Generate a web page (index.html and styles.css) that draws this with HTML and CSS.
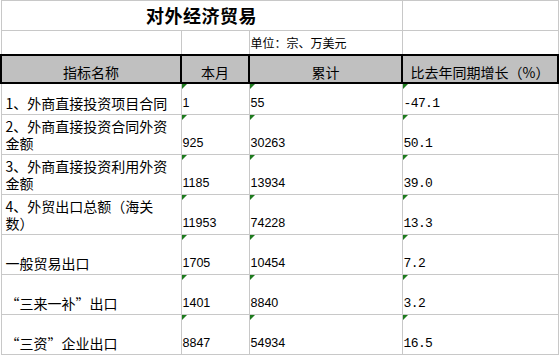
FILE: index.html
```html
<!DOCTYPE html>
<html lang="zh-CN">
<head>
    <meta charset="UTF-8">
    <meta name="viewport" content="width=device-width, initial-scale=1.0">
    <title>对外经济贸易</title>
    <link rel="stylesheet" href="styles.css">
</head>
<body>
    <table class="hoja">
        <colgroup>
            <col class="col-nombre">
            <col class="col-mes">
            <col class="col-total">
            <col class="col-crec">
        </colgroup>
        <tr class="fila-titulo">
            <td colspan="3" class="titulo">对外经济贸易</td>
            <td></td>
        </tr>
        <tr class="fila-unidad">
            <td></td>
            <td></td>
            <td class="unidad">单位：宗、万美元</td>
            <td></td>
        </tr>
        <tr class="fila-cabecera">
            <th>指标名称</th>
            <th>本月</th>
            <th>累计</th>
            <th>比去年同期增长（%）</th>
        </tr>
        <tr class="fila-corta">
            <td class="nombre">1、外商直接投资项目合同</td>
            <td class="num marca">1</td>
            <td class="num marca">55</td>
            <td class="pct marca">-47.1</td>
        </tr>
        <tr class="fila">
            <td class="nombre">2、外商直接投资合同外资<br>金额</td>
            <td class="num marca">925</td>
            <td class="num marca">30263</td>
            <td class="pct marca">50.1</td>
        </tr>
        <tr class="fila">
            <td class="nombre">3、外商直接投资利用外资<br>金额</td>
            <td class="num marca">1185</td>
            <td class="num marca">13934</td>
            <td class="pct marca">39.0</td>
        </tr>
        <tr class="fila">
            <td class="nombre">4、外贸出口总额（海关<br>数）</td>
            <td class="num marca">11953</td>
            <td class="num marca">74228</td>
            <td class="pct marca">13.3</td>
        </tr>
        <tr class="fila">
            <td class="nombre">一般贸易出口</td>
            <td class="num marca">1705</td>
            <td class="num marca">10454</td>
            <td class="pct marca">7.2</td>
        </tr>
        <tr class="fila">
            <td class="nombre">“三来一补”出口</td>
            <td class="num marca">1401</td>
            <td class="num marca">8840</td>
            <td class="pct marca borde-activo">3.2</td>
        </tr>
        <tr class="fila">
            <td class="nombre">“三资”企业出口</td>
            <td class="num marca">8847</td>
            <td class="num marca">54934</td>
            <td class="pct marca">16.5</td>
        </tr>
    </table>
</body>
</html>
```

FILE: styles.css
```css
html, body {
    margin: 0;
}

body {
    background: #fff;
    color: #000;
    font-family: "Noto Sans CJK SC", sans-serif;
}

.hoja {
    border-collapse: collapse;
    table-layout: fixed;
    width: 557px;
}

.col-nombre { width: 180px; }
.col-mes { width: 68px; }
.col-total { width: 153px; }
.col-crec { width: 156px; }

.hoja td,
.hoja th {
    border: 1px solid #c8c8c8;
    padding: 0 2px 2px;
    vertical-align: bottom;
    font-size: 14px;
    line-height: 17px;
    font-weight: normal;
    white-space: nowrap;
    overflow: hidden;
}

.fila-titulo { height: 30px; }
.fila-unidad { height: 24px; }
.fila-cabecera { height: 28px; }
.fila-corta { height: 32px; }
.fila { height: 40px; }

.hoja .titulo {
    text-align: center;
    vertical-align: middle;
    font-size: 18px;
    font-weight: bold;
    letter-spacing: 0.5px;
    padding: 0;
}

.hoja .unidad {
    vertical-align: middle;
    font-size: 12px;
    padding: 0 1px;
}

.hoja th {
    background: #c0c0c0;
    border: 2px solid #000;
    text-align: center;
    padding-bottom: 1px;
}

.hoja .nombre {
    padding-left: 4px;
}

.hoja .num {
    font-family: "Liberation Sans", Arial, sans-serif;
    font-size: 12.5px;
    padding-left: 1px;
}

.hoja .pct {
    font-family: "Liberation Mono", monospace;
    font-size: 13px;
    letter-spacing: -0.6px;
    padding-left: 1px;
}

.marca {
    position: relative;
}

.marca::before {
    content: "";
    position: absolute;
    left: 0;
    top: 0;
    border-top: 5px solid #1e7b1e;
    border-right: 5px solid transparent;
}

.borde-activo::after {
    content: "";
    position: absolute;
    top: 0;
    bottom: -1px;
    right: -3px;
    width: 2px;
    background: #000;
}
```
